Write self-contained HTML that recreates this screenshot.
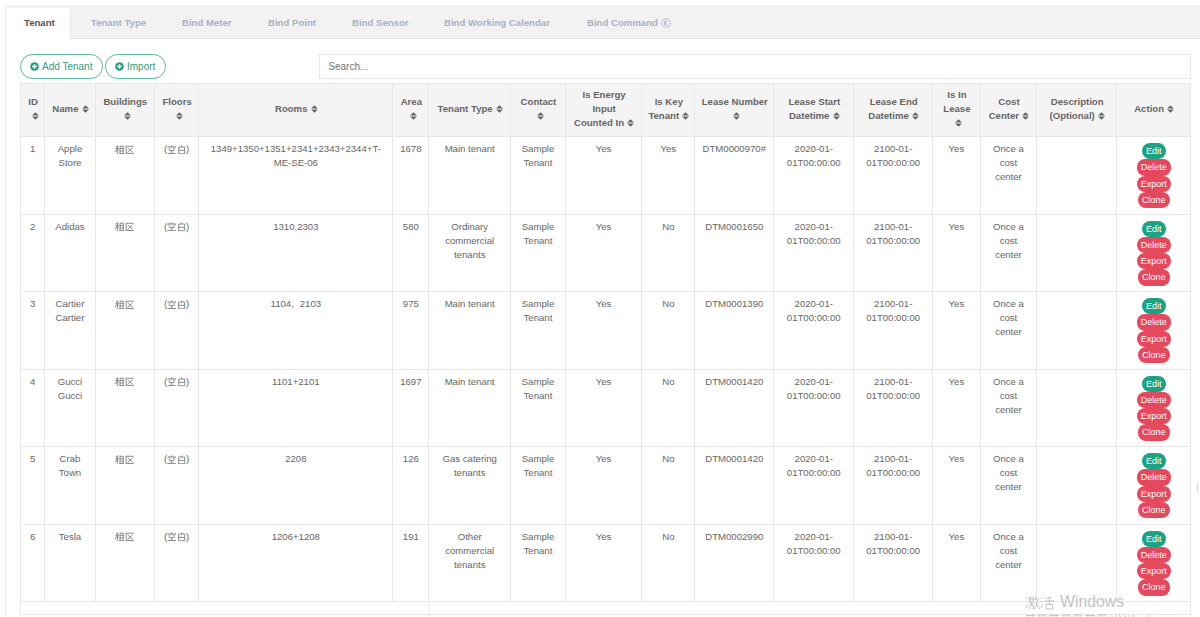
<!DOCTYPE html>
<html><head><meta charset="utf-8">
<style>
*{box-sizing:border-box;margin:0;padding:0}
html,body{width:1200px;height:617px;overflow:hidden;background:#fff;font-family:"Liberation Sans",sans-serif;color:#666}
.panel{position:absolute;left:5px;top:5px;width:1195px;height:620px;border-left:1px solid #e7e7e7}
.tabs{position:absolute;left:6px;top:5px;width:1194px;height:34px;background:#f2f2f2;border-bottom:1px solid #e4e4e4}
.tab{position:absolute;top:0;height:33px;font-size:9.6px;font-weight:bold;color:#aab1bf;line-height:36px;white-space:nowrap}
.tab.active{left:0;top:3px;width:65px;height:31px;background:#fff;color:#555;line-height:30px;padding-left:18px;border-right:1px solid #eaeaea}
.btn{position:absolute;top:54px;height:25px;border:1px solid #5bb89c;border-radius:13px;color:#339b80;font-size:10px;line-height:23px;white-space:nowrap}
.btn svg{position:absolute;top:7px}
.search{position:absolute;left:319px;top:54px;width:872px;height:25px;border:1px solid #e8e8e8;font-size:10px;color:#757575;line-height:23px;padding-left:8.3px}
table{position:absolute;left:20px;top:82.5px;border-collapse:collapse;table-layout:fixed;width:1171px}
th,td{border:1px solid #e8e8e8;text-align:center;font-size:9.6px;line-height:14px;padding:0 4px}
th{background:#f4f4f4;font-weight:bold;height:53.5px;vertical-align:middle;color:#666;padding:0 3.5px 1.5px 4.5px}
td{height:77.53px;vertical-align:top;padding-top:5px;color:#666}
tr.foot td{height:12.6px;padding:0}
.s{display:inline-block;width:7px;height:8px;vertical-align:-0.5px}
.w{margin-left:4px}
.cj{display:inline-block;width:9.4px;height:9.4px;vertical-align:-2px}
.ab{display:block;margin:0 auto;height:16.3px;border-radius:8px;color:#fff;font-size:9px;line-height:16px;white-space:nowrap}
.ed{background:#1ba383;width:24px;margin-top:1px}
.rd{background:#e4495e;width:34px}
.cl{width:32px}
.wm{position:absolute;left:1025px;top:593px;width:175px;height:20px;font-size:15.8px;color:#c4c4c4;white-space:nowrap}
.wm2{position:absolute;left:1025px;top:613px;height:5px;overflow:hidden}
.wm2 svg{display:block}
</style></head><body>
<svg width="0" height="0" style="position:absolute">
<defs>
<symbol id="sort" viewBox="0 0 7 8"><path d="M3.5 0.2 L6.9 3.4 H0.1 Z M3.5 7.8 L6.9 4.6 H0.1 Z" fill="#666"/></symbol>
<symbol id="zu" viewBox="0 0 12 12"><g fill="none" stroke="#777" stroke-width="1.1"><path d="M4.6 1.0 L1.2 2.1 M0.6 4.3 H5.1 M2.9 1.8 V11.4 M2.9 5 L0.5 8.9 M3.2 5.6 L4.9 7.3 M6.4 1.6 H10.6 V10.6 M6.4 1.6 V10.6 M6.4 4.6 H10.6 M6.4 7.6 H10.6 M5.4 10.8 H11.7"/></g></symbol>
<symbol id="qu" viewBox="0 0 12 12"><g fill="none" stroke="#777" stroke-width="1.1"><path d="M0.8 1.6 H11 M1.5 1.6 V10.8 M1.2 10.8 H11.4 M3.6 3.8 L9.6 9.2 M9.6 3.6 L3.4 9.6"/></g></symbol>
<symbol id="kong" viewBox="0 0 12 12"><g fill="none" stroke="#777" stroke-width="1.1"><path d="M6 0.4 V2.2 M1.3 4.2 V2.4 H10.7 V4.2 M4.6 3.4 L2.4 6.2 M7.4 3.4 L9.8 6.2 M2.6 7.2 H9.4 M6 7.2 V10.8 M0.8 10.8 H11.2"/></g></symbol>
<symbol id="bai" viewBox="0 0 12 12"><g fill="none" stroke="#777" stroke-width="1.1"><path d="M6.6 0.4 L5.4 2.4 M2.1 2.6 H9.9 V11.2 H2.1 Z M2.1 6.8 H9.9"/></g></symbol>
<symbol id="plus" viewBox="0 0 10 10"><circle cx="5" cy="5" r="4.8" fill="#22a07c"/><path d="M5 2.4 V7.6 M2.4 5 H7.6" stroke="#fff" stroke-width="1.6"/></symbol>
</defs></svg>

<div class="panel"></div>
<div class="tabs">
  <div class="tab active">Tenant</div>
  <div class="tab" style="left:85px">Tenant Type</div>
  <div class="tab" style="left:176px">Bind Meter</div>
  <div class="tab" style="left:262px">Bind Point</div>
  <div class="tab" style="left:346px">Bind Sensor</div>
  <div class="tab" style="left:438px">Bind Working Calendar</div>
  <div class="tab" style="left:581px">Bind Command <svg width="10" height="10" viewBox="0 0 10 10" style="vertical-align:-1.5px"><circle cx="5" cy="5" r="4.3" fill="none" stroke="#bcc1cb" stroke-width="1"/><path d="M3.6 3 H6.4 M3.6 5 H6 M3.6 7 H6.4 M3.6 3 V7" stroke="#aab1bf" stroke-width="0.9" fill="none"/></svg></div>
</div>

<div class="btn" style="left:20px;width:83px;padding-left:21px"><svg width="9" height="9" style="left:9px"><use href="#plus"/></svg>Add Tenant</div>
<div class="btn" style="left:105px;width:61px;padding-left:21px"><svg width="9" height="9" style="left:9px"><use href="#plus"/></svg>Import</div>
<div class="search">Search...</div>

<table>
<colgroup>
<col style="width:24.3px"><col style="width:50.4px"><col style="width:59.2px"><col style="width:44.5px"><col style="width:193.9px"><col style="width:36.2px"><col style="width:81.5px"><col style="width:55.0px"><col style="width:76.3px"><col style="width:53.2px"><col style="width:78.7px"><col style="width:80.3px"><col style="width:78.5px"><col style="width:48.0px"><col style="width:56.1px"><col style="width:80.4px"><col style="width:73.5px">
</colgroup>
<thead><tr>
<th>ID<br><svg class="s w"><use href="#sort"/></svg></th>
<th>Name&nbsp;<svg class="s" style="margin-left:0.5px"><use href="#sort"/></svg></th>
<th>Buildings<br><svg class="s w"><use href="#sort"/></svg></th>
<th>Floors<br><svg class="s w"><use href="#sort"/></svg></th>
<th>Rooms&nbsp;<svg class="s" style="margin-left:0.5px"><use href="#sort"/></svg></th>
<th>Area<br><svg class="s w"><use href="#sort"/></svg></th>
<th>Tenant Type&nbsp;<svg class="s" style="margin-left:0.5px"><use href="#sort"/></svg></th>
<th>Contact<br><svg class="s w"><use href="#sort"/></svg></th>
<th>Is Energy<br>Input<br>Counted In&nbsp;<svg class="s" style="margin-left:0.5px"><use href="#sort"/></svg></th>
<th>Is Key<br>Tenant&nbsp;<svg class="s" style="margin-left:0.5px"><use href="#sort"/></svg></th>
<th>Lease Number<br><svg class="s w"><use href="#sort"/></svg></th>
<th>Lease Start<br>Datetime&nbsp;<svg class="s" style="margin-left:0.5px"><use href="#sort"/></svg></th>
<th>Lease End<br>Datetime&nbsp;<svg class="s" style="margin-left:0.5px"><use href="#sort"/></svg></th>
<th>Is In<br>Lease<br><svg class="s w"><use href="#sort"/></svg></th>
<th>Cost<br>Center&nbsp;<svg class="s" style="margin-left:0.5px"><use href="#sort"/></svg></th>
<th>Description<br>(Optional)&nbsp;<svg class="s" style="margin-left:0.5px"><use href="#sort"/></svg></th>
<th>Action&nbsp;<svg class="s" style="margin-left:0.5px"><use href="#sort"/></svg></th>
</tr></thead>
<tbody id="tb">
<tr><td>1</td><td>Apple<br>Store</td><td><svg class="cj"><use href="#zu"/></svg><svg class="cj"><use href="#qu"/></svg></td><td>(<svg class="cj"><use href="#kong"/></svg><svg class="cj"><use href="#bai"/></svg>)</td><td>1349+1350+1351+2341+2343+2344+T-<br>ME-SE-06</td><td>1678</td><td>Main tenant</td><td>Sample<br>Tenant</td><td>Yes</td><td>Yes</td><td>DTM0000970#</td><td>2020-01-<br>01T00:00:00</td><td>2100-01-<br>01T00:00:00</td><td>Yes</td><td>Once a<br>cost<br>center</td><td></td><td><span class="ab ed">Edit</span><span class="ab rd">Delete</span><span class="ab rd">Export</span><span class="ab rd cl">Clone</span></td></tr>
<tr><td>2</td><td>Adidas</td><td><svg class="cj"><use href="#zu"/></svg><svg class="cj"><use href="#qu"/></svg></td><td>(<svg class="cj"><use href="#kong"/></svg><svg class="cj"><use href="#bai"/></svg>)</td><td>1310,2303</td><td>580</td><td>Ordinary<br>commercial<br>tenants</td><td>Sample<br>Tenant</td><td>Yes</td><td>No</td><td>DTM0001650</td><td>2020-01-<br>01T00:00:00</td><td>2100-01-<br>01T00:00:00</td><td>Yes</td><td>Once a<br>cost<br>center</td><td></td><td><span class="ab ed">Edit</span><span class="ab rd">Delete</span><span class="ab rd">Export</span><span class="ab rd cl">Clone</span></td></tr>
<tr><td>3</td><td>Cartier<br>Cartier</td><td><svg class="cj"><use href="#zu"/></svg><svg class="cj"><use href="#qu"/></svg></td><td>(<svg class="cj"><use href="#kong"/></svg><svg class="cj"><use href="#bai"/></svg>)</td><td>1104<span style="display:inline-block;width:8.5px;text-align:left">,</span>2103</td><td>975</td><td>Main tenant</td><td>Sample<br>Tenant</td><td>Yes</td><td>No</td><td>DTM0001390</td><td>2020-01-<br>01T00:00:00</td><td>2100-01-<br>01T00:00:00</td><td>Yes</td><td>Once a<br>cost<br>center</td><td></td><td><span class="ab ed">Edit</span><span class="ab rd">Delete</span><span class="ab rd">Export</span><span class="ab rd cl">Clone</span></td></tr>
<tr><td>4</td><td>Gucci<br>Gucci</td><td><svg class="cj"><use href="#zu"/></svg><svg class="cj"><use href="#qu"/></svg></td><td>(<svg class="cj"><use href="#kong"/></svg><svg class="cj"><use href="#bai"/></svg>)</td><td>1101+2101</td><td>1697</td><td>Main tenant</td><td>Sample<br>Tenant</td><td>Yes</td><td>No</td><td>DTM0001420</td><td>2020-01-<br>01T00:00:00</td><td>2100-01-<br>01T00:00:00</td><td>Yes</td><td>Once a<br>cost<br>center</td><td></td><td><span class="ab ed">Edit</span><span class="ab rd">Delete</span><span class="ab rd">Export</span><span class="ab rd cl">Clone</span></td></tr>
<tr><td>5</td><td>Crab<br>Town</td><td><svg class="cj"><use href="#zu"/></svg><svg class="cj"><use href="#qu"/></svg></td><td>(<svg class="cj"><use href="#kong"/></svg><svg class="cj"><use href="#bai"/></svg>)</td><td>2208</td><td>126</td><td>Gas catering<br>tenants</td><td>Sample<br>Tenant</td><td>Yes</td><td>No</td><td>DTM0001420</td><td>2020-01-<br>01T00:00:00</td><td>2100-01-<br>01T00:00:00</td><td>Yes</td><td>Once a<br>cost<br>center</td><td></td><td><span class="ab ed">Edit</span><span class="ab rd">Delete</span><span class="ab rd">Export</span><span class="ab rd cl">Clone</span></td></tr>
<tr><td>6</td><td>Tesla</td><td><svg class="cj"><use href="#zu"/></svg><svg class="cj"><use href="#qu"/></svg></td><td>(<svg class="cj"><use href="#kong"/></svg><svg class="cj"><use href="#bai"/></svg>)</td><td>1206+1208</td><td>191</td><td>Other<br>commercial<br>tenants</td><td>Sample<br>Tenant</td><td>Yes</td><td>No</td><td>DTM0002990</td><td>2020-01-<br>01T00:00:00</td><td>2100-01-<br>01T00:00:00</td><td>Yes</td><td>Once a<br>cost<br>center</td><td></td><td><span class="ab ed">Edit</span><span class="ab rd">Delete</span><span class="ab rd">Export</span><span class="ab rd cl">Clone</span></td></tr>
<tr class="foot"><td colspan="17"></td></tr>
</tbody>
</table>
<div style="position:absolute;left:1197px;top:481px;width:6px;height:13px;border-radius:3px;border-left:1.5px solid #d9d9d9"></div>
<div style="position:absolute;left:429px;top:602px;width:1px;height:12px;background:#efefef"></div>
<div class="wm"><svg width="30" height="16" style="position:absolute;left:0;top:2px" viewBox="0 0 32 16"><g fill="none" stroke="#c6c6c6" stroke-width="1.1"><path d="M1.5 2 L3 3.2 M1 6 L2.5 7 M1 13.5 L3 9.5 M6.5 1 L6 2 M4.8 2.5 H9 V6.5 H4.8 Z M4.8 4.5 H9 M7 7 V8 M4.5 8.5 H9.5 M6.5 8.5 L4.5 14.5 M6 10.5 H8.8 V13.5 L8 14.5 M11.5 1 L10.5 5 M11 3.5 H15 M14 3.5 L13 8 L10 14.5 M11.5 7 L15.5 14.5"/><path transform="translate(16 0)" d="M1.5 2 L3 3.2 M1 6 L2.5 7 M1 13.5 L3 9.5 M13 1.5 L6 3 M5 6 H15 M10 2.5 V9.5 M6.5 9.5 H13.5 V14.5 H6.5 Z"/></g></svg><span style="position:absolute;left:35px;top:0">Windows</span></div>
<div class="wm2"><svg width="125" height="5" viewBox="0 0 125 5"><g stroke="#c9c9c9" stroke-width="1" fill="none"><path d="M1 2.5 H10 M4 1 V5 M8 1 V5 M12 2 H22 M15 1 V5 M19 1 V5 M24 2.5 H34 M27 1 V5 M31 1 V5 M36 2 H46 M39 1 V5 M43 1 V5 M48 2 H58 M51 1 V5 M55 1 V5 M60 2.5 H70 M63 1 V5 M67 1 V5 M72 2 H82 M75 1 V5 M79 1 V5 M86 1 L88 5 M90 1 L92 5 M94 1 L96 5 M99 1 L101 5 M104 2 V5 M108 2 V5 M124 1 V5"/></g></svg></div>
</body></html>
